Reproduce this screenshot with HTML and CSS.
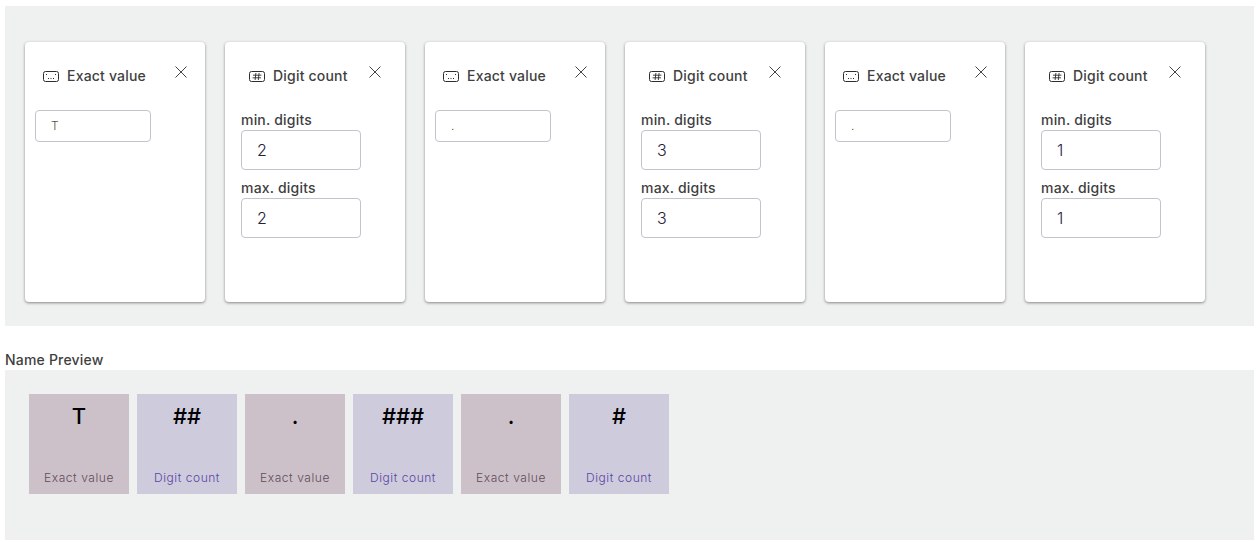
FILE: index.html
```html
<!DOCTYPE html>
<html lang="en">
<head>
<meta charset="utf-8">
<title>Name Preview</title>
<link rel="stylesheet" href="styles.css">
</head>
<body>
<section class="panel rules">
  <div class="card card-exact">
    <header class="card-head">
      <span class="title"><svg class="icon" viewBox="0 0 16 11"><rect x=".5" y=".5" width="15" height="10" rx="2"/><path d="M3 3.5h1M12 3.5h1M5 7.5h1M7.5 7.5h1M10 7.5h1"/></svg>Exact value</span>
      <svg class="close" viewBox="0 0 12 12"><path d="M.5.5l11 11M11.5.5l-11 11"/></svg>
    </header>
    <input class="field field-small" value="T" aria-label="Exact value">
  </div>
  <div class="card card-digit">
    <header class="card-head">
      <span class="title"><svg class="icon" viewBox="0 0 16 11"><rect x=".5" y=".5" width="15" height="10" rx="2"/><path class="hash" d="M6.9 2l-.8 7M10.1 2l-.8 7M4 4.2h8.4M3.6 6.8h8.4"/></svg>Digit count</span>
      <svg class="close" viewBox="0 0 12 12"><path d="M.5.5l11 11M11.5.5l-11 11"/></svg>
    </header>
    <label class="field-label" for="min1">min. digits</label>
    <input class="field" id="min1" value="2">
    <label class="field-label" for="max1">max. digits</label>
    <input class="field" id="max1" value="2">
  </div>
  <div class="card card-exact">
    <header class="card-head">
      <span class="title"><svg class="icon" viewBox="0 0 16 11"><rect x=".5" y=".5" width="15" height="10" rx="2"/><path d="M3 3.5h1M12 3.5h1M5 7.5h1M7.5 7.5h1M10 7.5h1"/></svg>Exact value</span>
      <svg class="close" viewBox="0 0 12 12"><path d="M.5.5l11 11M11.5.5l-11 11"/></svg>
    </header>
    <input class="field field-small" value="." aria-label="Exact value">
  </div>
  <div class="card card-digit">
    <header class="card-head">
      <span class="title"><svg class="icon" viewBox="0 0 16 11"><rect x=".5" y=".5" width="15" height="10" rx="2"/><path class="hash" d="M6.9 2l-.8 7M10.1 2l-.8 7M4 4.2h8.4M3.6 6.8h8.4"/></svg>Digit count</span>
      <svg class="close" viewBox="0 0 12 12"><path d="M.5.5l11 11M11.5.5l-11 11"/></svg>
    </header>
    <label class="field-label" for="min2">min. digits</label>
    <input class="field" id="min2" value="3">
    <label class="field-label" for="max2">max. digits</label>
    <input class="field" id="max2" value="3">
  </div>
  <div class="card card-exact">
    <header class="card-head">
      <span class="title"><svg class="icon" viewBox="0 0 16 11"><rect x=".5" y=".5" width="15" height="10" rx="2"/><path d="M3 3.5h1M12 3.5h1M5 7.5h1M7.5 7.5h1M10 7.5h1"/></svg>Exact value</span>
      <svg class="close" viewBox="0 0 12 12"><path d="M.5.5l11 11M11.5.5l-11 11"/></svg>
    </header>
    <input class="field field-small" value="." aria-label="Exact value">
  </div>
  <div class="card card-digit">
    <header class="card-head">
      <span class="title"><svg class="icon" viewBox="0 0 16 11"><rect x=".5" y=".5" width="15" height="10" rx="2"/><path class="hash" d="M6.9 2l-.8 7M10.1 2l-.8 7M4 4.2h8.4M3.6 6.8h8.4"/></svg>Digit count</span>
      <svg class="close" viewBox="0 0 12 12"><path d="M.5.5l11 11M11.5.5l-11 11"/></svg>
    </header>
    <label class="field-label" for="min3">min. digits</label>
    <input class="field" id="min3" value="1">
    <label class="field-label" for="max3">max. digits</label>
    <input class="field" id="max3" value="1">
  </div>
</section>
<h2 class="preview-label">Name Preview</h2>
<section class="panel preview">
  <div class="tile tile-exact"><span class="tile-value">T</span><span class="tile-type">Exact value</span></div>
  <div class="tile tile-digit"><span class="tile-value">##</span><span class="tile-type">Digit count</span></div>
  <div class="tile tile-exact"><span class="tile-value">.</span><span class="tile-type">Exact value</span></div>
  <div class="tile tile-digit"><span class="tile-value">###</span><span class="tile-type">Digit count</span></div>
  <div class="tile tile-exact"><span class="tile-value">.</span><span class="tile-type">Exact value</span></div>
  <div class="tile tile-digit"><span class="tile-value">#</span><span class="tile-type">Digit count</span></div>
</section>
</body>
</html>
```
FILE: styles.css
```css
* { box-sizing: border-box; }
html, body { margin: 0; background: #fff; }
body {
  padding: 6px 2px 0 5px;
  font-family: Inter, "Liberation Sans", sans-serif;
  color: #3f3f3f;
  overflow: hidden;
}
.panel { background: #eff1f0; display: flex; }
.rules { height: 320px; padding: 36px 20px 24px; gap: 20px; }
.card {
  width: 180px;
  height: 260px;
  background: #fff;
  border-radius: 4px;
  box-shadow: 0 1px 3px rgba(0, 0, 0, .45);
  display: flex;
  flex-direction: column;
  align-items: flex-start;
}
.card-exact { padding: 24px 10px 0; }
.card-digit { padding: 24px 16px 0; }
.card-head {
  align-self: stretch;
  display: flex;
  justify-content: space-between;
  align-items: flex-start;
  height: 44px;
  padding: 0 8px;
}
.title {
  display: flex;
  align-items: flex-start;
  gap: 8px;
  height: 20px;
  font-size: 14px;
  line-height: 20px;
  font-weight: 500;
  letter-spacing: .2px;
  white-space: nowrap;
}
.icon { width: 16px; height: 11px; margin-top: 5px; fill: none; stroke: #2e2e2e; stroke-width: 1; flex: none; }
.hash { stroke-width: .9; }
.close { width: 12px; height: 12px; fill: none; stroke: #444; stroke-width: 1; flex: none; }
.field {
  width: 120px;
  height: 40px;
  border: 1px solid #c2c4cc;
  border-radius: 4px;
  padding: 0 15px;
  background: #fff;
  font: 300 16px Inter, "Liberation Sans", sans-serif;
  color: #1f2437;
  outline: none;
}
.field-small { width: 116px; height: 32px; padding-bottom: 2px; font-size: 12px; color: #5e5345; }
.field-label {
  font-size: 14px;
  line-height: 20px;
  font-weight: 500;
  letter-spacing: .2px;
  height: 20px;
}
.field + .field-label { margin-top: 8px; }
.preview-label {
  margin: 24px 0 0;
  font-size: 14px;
  line-height: 19px;
  font-weight: 500;
  letter-spacing: .2px;
  height: 20px;
  color: #3f3f3f;
}
.preview { height: 170px; padding: 24px; gap: 8px; align-items: flex-start; }
.tile {
  width: 100px;
  height: 100px;
  display: flex;
  flex-direction: column;
  align-items: center;
  justify-content: space-between;
  padding: 9px 0 8px;
}
.tile-exact { background: #cdc1c9; color: #604c5b; }
.tile-digit { background: #cecbdd; color: #5c46a4; }
.tile-value { font-size: 22px; line-height: 27px; font-weight: 500; color: #000; }
.tile-type { font-size: 12px; line-height: 16px; letter-spacing: .55px; font-weight: 300; }
```
